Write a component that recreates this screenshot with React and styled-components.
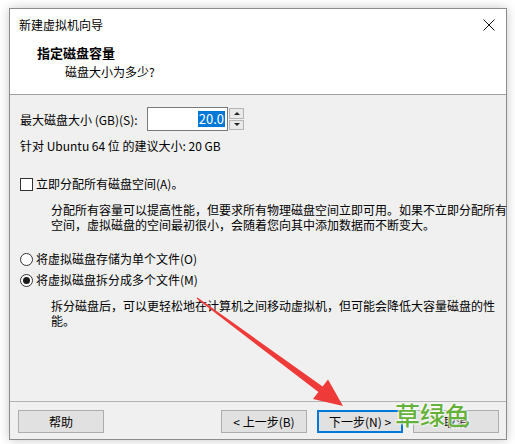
import styled, { createGlobalStyle } from "styled-components";

const GlobalStyle = createGlobalStyle`
  *, *::before, *::after {
    box-sizing: border-box;
  }
  html, body {
    margin: 0;
    padding: 0;
    background: #ffffff;
  }
  body {
    font-family: "Noto Sans CJK SC", "Noto Sans", sans-serif;
    font-size: 12px;
    color: #000000;
  }
`;

const Page = styled.div`
  position: relative;
  width: 515px;
  height: 444px;
  overflow: hidden;
`;

const Window = styled.div`
  margin: 8px 0 0 9px;
  width: 498px;
  height: 432px;
  border: 1px solid #8c8c8c;
  background: #f0f0f0;
  box-shadow: 0 0 10px rgba(0, 0, 0, 0.22);
  display: flex;
  flex-direction: column;
`;

const TitleBar = styled.div`
  flex-shrink: 0;
  height: 31px;
  background: #ffffff;
  display: flex;
  align-items: center;
  justify-content: space-between;
  padding: 0 10px 0 9px;
  line-height: 1;
`;

const CloseButton = styled.div`
  width: 14px;
  height: 14px;
  display: flex;
  align-items: center;
  justify-content: center;
`;

const Header = styled.div`
  flex-shrink: 0;
  height: 55px;
  background: #ffffff;
  border-bottom: 1px solid #a0a0a0;
  padding: 4px 0 0 27px;
  display: flex;
  flex-direction: column;
`;

const HeaderTitle = styled.div`
  font-size: 13px;
  font-weight: 700;
  line-height: 18px;
`;

const HeaderSub = styled.div`
  line-height: 19px;
  padding-left: 28px;
`;

const Content = styled.div`
  flex: 1;
  min-height: 0;
  padding: 12px 10px 0 10px;
  display: flex;
  flex-direction: column;
`;

const SizeRow = styled.div`
  display: flex;
  align-items: center;
  height: 24px;
  gap: 4px;
`;

const SizeLabel = styled.span`
  width: 123px;
  white-space: nowrap;
`;

const SpinBox = styled.div`
  display: flex;
  align-items: stretch;
  height: 24px;
`;

const NumberField = styled.div`
  width: 81px;
  background: #ffffff;
  border: 1px solid #7a7a7a;
  display: flex;
  align-items: center;
  justify-content: flex-end;
  padding-right: 2px;
`;

const Selected = styled.span`
  background: #0078d7;
  color: #ffffff;
  font-size: 13px;
  line-height: 16px;
  padding: 0 1px;
`;

const Arrows = styled.div`
  width: 15px;
  margin-left: 1px;
  display: flex;
  flex-direction: column;
  gap: 1px;
  padding: 1px 0;
`;

const ArrowButton = styled.div`
  flex: 1;
  background: #e9e9e9;
  border: 1px solid #b5b5b5;
  display: flex;
  align-items: center;
  justify-content: center;
  &::after {
    content: "";
    border-left: 3px solid transparent;
    border-right: 3px solid transparent;
    ${(p) =>
      p.$down
        ? "border-top: 3px solid #222;"
        : "border-bottom: 3px solid #222;"}
  }
`;

const Line = styled.div`
  line-height: 16px;
  margin-top: ${(p) => p.$gap || 0}px;
`;

const Choice = styled.div`
  display: flex;
  align-items: center;
  gap: 2px;
  line-height: 16px;
  margin-top: ${(p) => p.$gap || 0}px;
`;

const CheckBox = styled.span`
  width: 13px;
  height: 13px;
  border: 1px solid #333333;
  background: #ffffff;
  margin-right: 1px;
`;

const Radio = styled.span`
  width: 13px;
  height: 13px;
  border: 1px solid #333333;
  border-radius: 50%;
  background: #ffffff;
  margin-right: 1px;
  display: flex;
  align-items: center;
  justify-content: center;
  &::after {
    content: "";
    width: 7px;
    height: 7px;
    border-radius: 50%;
    background: ${(p) => (p.$checked ? "#1a1a1a" : "transparent")};
  }
`;

const Note = styled.p`
  margin: ${(p) => p.$gap || 0}px 0 0 31px;
  line-height: 15px;
  white-space: nowrap;
`;

const Footer = styled.div`
  flex-shrink: 0;
  height: 38px;
  border-top: 1px solid #b4b4b4;
  display: flex;
  align-items: flex-start;
  padding: 8px 7px 0 8px;
  gap: 10px;
`;

const Button = styled.button`
  width: 86px;
  height: 23px;
  background: #e1e1e1;
  border: ${(p) => (p.$primary ? "2px solid #0078d7" : "1px solid #adadad")};
  font-family: inherit;
  font-size: 12px;
  color: #000000;
  padding: 0;
  line-height: 1;
  ${(p) => p.$push && "margin-left: auto;"}
`;

const Overlay = styled.svg`
  position: absolute;
  left: 0;
  top: 0;
  pointer-events: none;
`;

const Stamp = styled.div`
  position: absolute;
  left: 395px;
  top: 402px;
  font-size: 25px;
  font-weight: 500;
  line-height: 1;
  color: #66b13a;
  text-shadow: 0 0 2px #ffffff, 0 0 2px #ffffff, 0 0 3px #ffffff;
`;

export default function App() {
  return (
    <Page>
      <GlobalStyle />
      <Window>
        <TitleBar>
          <span>新建虚拟机向导</span>
          <CloseButton>
            <svg width="12" height="12" viewBox="0 0 12 12">
              <path d="M0.5 0.5L11.5 11.5M11.5 0.5L0.5 11.5" stroke="#111" strokeWidth="1" />
            </svg>
          </CloseButton>
        </TitleBar>
        <Header>
          <HeaderTitle>指定磁盘容量</HeaderTitle>
          <HeaderSub>磁盘大小为多少?</HeaderSub>
        </Header>
        <Content>
          <SizeRow>
            <SizeLabel>最大磁盘大小 (GB)(S):</SizeLabel>
            <SpinBox>
              <NumberField>
                <Selected>20.0</Selected>
              </NumberField>
              <Arrows>
                <ArrowButton />
                <ArrowButton $down />
              </Arrows>
            </SpinBox>
          </SizeRow>
          <Line $gap={7}>针对 Ubuntu 64 位 的建议大小: 20 GB</Line>
          <Choice $gap={22}>
            <CheckBox />
            <span>立即分配所有磁盘空间(A)。</span>
          </Choice>
          <Note $gap={10}>
            分配所有容量可以提高性能，但要求所有物理磁盘空间立即可用。如果不立即分配所有
            <br />
            空间，虚拟磁盘的空间最初很小，会随着您向其中添加数据而不断变大。
          </Note>
          <Choice $gap={19}>
            <Radio />
            <span>将虚拟磁盘存储为单个文件(O)</span>
          </Choice>
          <Choice $gap={5}>
            <Radio $checked />
            <span>将虚拟磁盘拆分成多个文件(M)</span>
          </Choice>
          <Note $gap={10}>
            拆分磁盘后，可以更轻松地在计算机之间移动虚拟机，但可能会降低大容量磁盘的性
            <br />
            能。
          </Note>
        </Content>
        <Footer>
          <Button>帮助</Button>
          <Button $push>&lt; 上一步(B)</Button>
          <Button $primary>下一步(N) &gt;</Button>
          <Button>取消</Button>
        </Footer>
      </Window>
      <Overlay width="515" height="444" viewBox="0 0 515 444">
        <polygon
          points="196.5,298.6 318.4,392.1 313,399 343,406 328,379.5 322.6,386.5 197.5,297.4"
          fill="#ef3a3a"
        />
      </Overlay>
      <Stamp>草绿色</Stamp>
    </Page>
  );
}
